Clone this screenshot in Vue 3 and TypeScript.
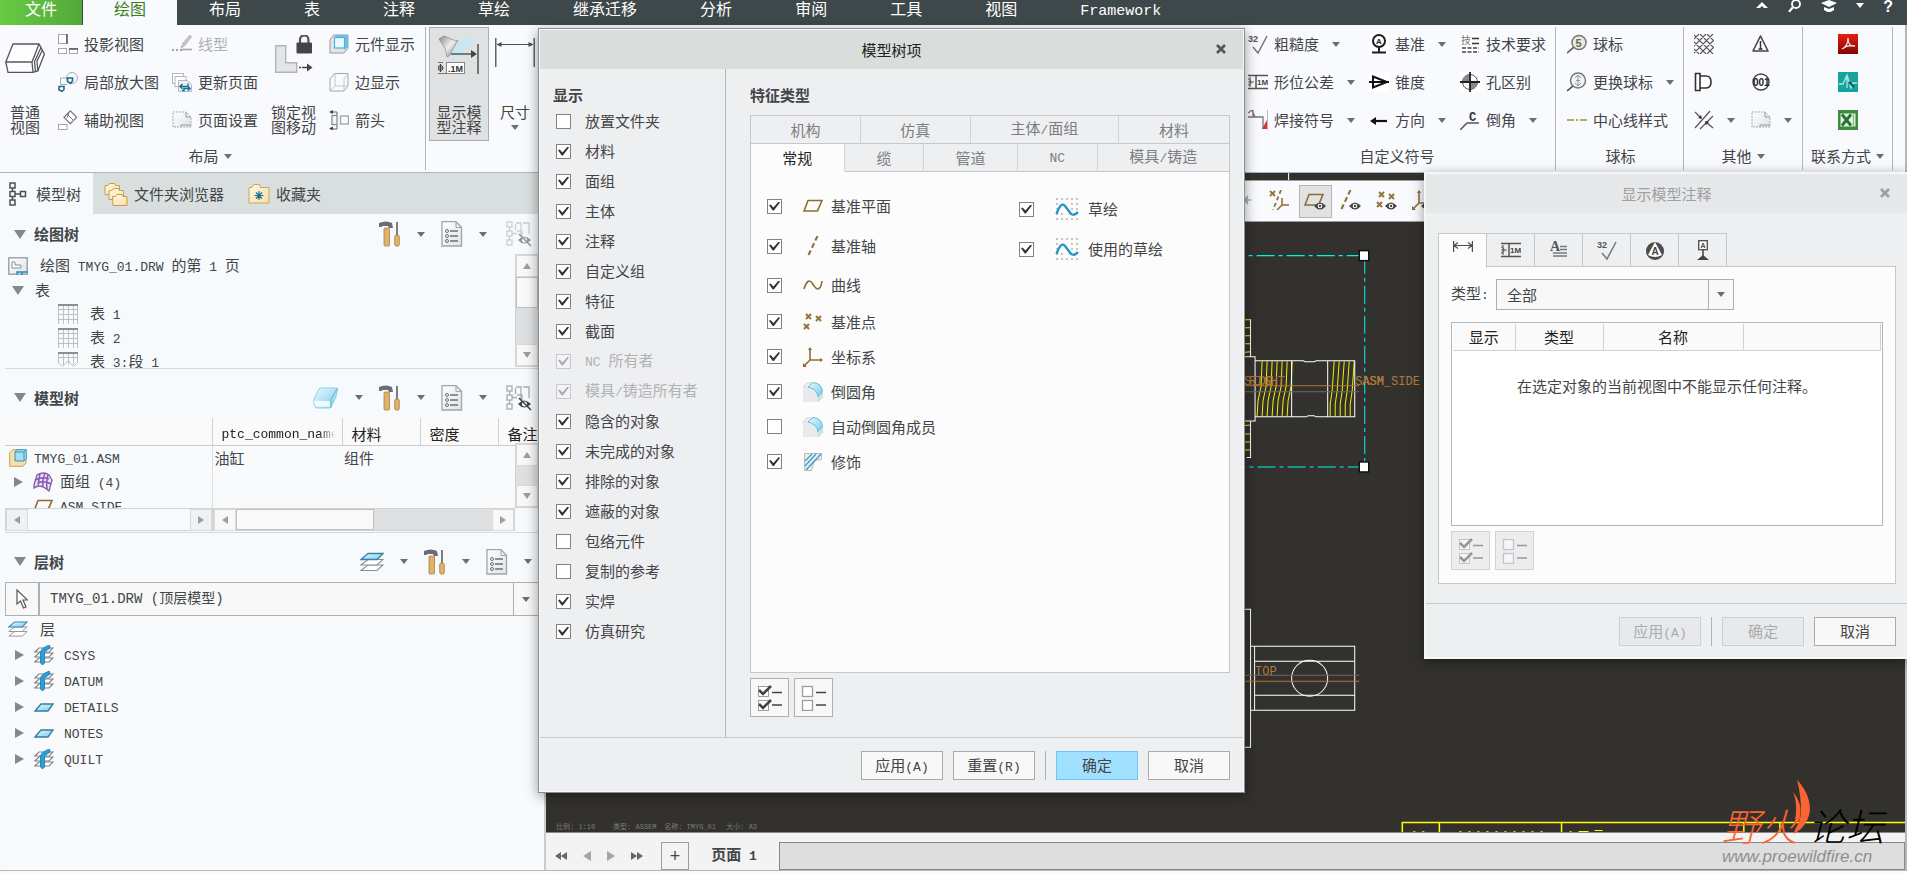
<script setup lang="ts">
import { h, reactive, ref } from 'vue'

interface Item { label: string; icon?: string; arrow?: boolean; off?: boolean }
interface Check { label: string; on: boolean; icon?: string; off?: boolean; tall?: string }

const Txt = (props: { t: string }) =>
  h('span', { class: 'mix' }, props.t.split(/([\x20-\x7e]+)/).filter(Boolean).map(s => h('span', { class: /^[\x20-\x7e]/.test(s) ? 'la' : 'zh' }, s)))
Txt.props = ['t']

const menus = ['布局', '表', '注释', '草绘', '继承迁移', '分析', '审阅', '工具', '视图', 'Framework']

const viewCols: Item[][] = [
  [{ label: '投影视图', icon: 'proj' }, { label: '局部放大图', icon: 'detail' }, { label: '辅助视图', icon: 'aux' }],
  [{ label: '线型', icon: 'pencil', off: true }, { label: '更新页面', icon: 'refresh' }, { label: '页面设置', icon: 'sheet' }],
]
const compCol: Item[] = [{ label: '元件显示', icon: 'cubeblue' }, { label: '边显示', icon: 'cubeline' }, { label: '箭头', icon: 'arrows' }]
const symbolCols: Item[][] = [
  [{ label: '粗糙度', icon: 'rough', arrow: true }, { label: '形位公差', icon: 'gtol', arrow: true }, { label: '焊接符号', icon: 'weld', arrow: true }],
  [{ label: '基准', icon: 'datum', arrow: true }, { label: '锥度', icon: 'taper' }, { label: '方向', icon: 'dir', arrow: true }],
  [{ label: '技术要求', icon: 'tech' }, { label: '孔区别', icon: 'hole' }, { label: '倒角', icon: 'chamfer', arrow: true }],
]
const balloonCol: Item[] = [{ label: '球标', icon: 'balloon' }, { label: '更换球标', icon: 'balloon2', arrow: true }, { label: '中心线样式', icon: 'center' }]
const otherCols: Item[][] = [
  [{ label: '', icon: 'hatch' }, { label: '', icon: 'plug' }, { label: '', icon: 'cross', arrow: true }],
  [{ label: '', icon: 'tri' }, { label: '', icon: 'n001' }, { label: '', icon: 'sheet', arrow: true }],
]
const contactCol: Item[] = [{ label: '', icon: 'pdf' }, { label: '', icon: 'cad' }, { label: '', icon: 'xls' }]

const layers = [
  { n: 'CSYS', icon: 'layerpin' }, { n: 'DATUM', icon: 'layerpin' }, { n: 'DETAILS', icon: 'layer1' },
  { n: 'NOTES', icon: 'layer1' }, { n: 'QUILT', icon: 'layerpin' },
]

const show = reactive<Check[]>([
  { label: '放置文件夹', on: false }, { label: '材料', on: true }, { label: '面组', on: true }, { label: '主体', on: true },
  { label: '注释', on: true }, { label: '自定义组', on: true }, { label: '特征', on: true }, { label: '截面', on: true },
  { label: 'NC 所有者', on: true, off: true }, { label: '模具/铸造所有者', on: true, off: true }, { label: '隐含的对象', on: true },
  { label: '未完成的对象', on: true }, { label: '排除的对象', on: true }, { label: '遮蔽的对象', on: true },
  { label: '包络元件', on: false }, { label: '复制的参考', on: false }, { label: '实焊', on: true }, { label: '仿真研究', on: true },
])
const features = reactive<Check[]>([
  { label: '基准平面', on: true, icon: 'plane', tall: 'r40' }, { label: '基准轴', on: true, icon: 'axis', tall: 'r40' },
  { label: '曲线', on: true, icon: 'curve', tall: 'r38' }, { label: '基准点', on: true, icon: 'points' },
  { label: '坐标系', on: true, icon: 'csys' }, { label: '倒圆角', on: true, icon: 'round' },
  { label: '自动倒圆角成员', on: false, icon: 'round' }, { label: '修饰', on: true, icon: 'cosmetic' },
])
const sketches = reactive<Check[]>([
  { label: '草绘', on: true, icon: 'sketch', tall: 'r40' }, { label: '使用的草绘', on: true, icon: 'sketch', tall: 'r40' },
])
const tabRow1 = [{ t: '机构', w: 'w110' }, { t: '仿真', w: 'w110' }, { t: '主体/面组', w: 'w149' }, { t: '材料', w: 'w110' }]
const tabRow2 = [{ t: '常规', w: 'w94' }, { t: '缆', w: 'w80' }, { t: '管道', w: 'w94' }, { t: 'NC', w: 'w80' }, { t: '模具/铸造', w: 'w132' }]
const activeTab = ref('常规')
const annTabs = ['t-dim', 't-gtol', 't-note', 't-rough', 't-sym', 't-datum']
const activeAnn = ref('t-dim')
const kind = ref('全部')
const layerModel = ref('TMYG_01.DRW (顶层模型)')

const hatchA = Array.from({ length: 7 }, (_, i) => 1256 + i * 5)
const hatchB = Array.from({ length: 5 }, (_, i) => 1329 + i * 5)
</script>

<template>
  <div class="app">
    <svg class="defs" aria-hidden="true">
      <defs>
        <linearGradient id="gb" x1="0" y1="0" x2="1" y2="1"><stop offset="0" stop-color="#e8fbff" /><stop offset="1" stop-color="#7cc9e6" /></linearGradient>
        <linearGradient id="gy" x1="0" y1="0" x2="1" y2="1"><stop offset="0" stop-color="#fff8e4" /><stop offset="1" stop-color="#f6dfa6" /></linearGradient>
        <linearGradient id="gd" x1="0" y1="0" x2="1" y2="1"><stop offset="0" stop-color="#fff" /><stop offset="1" stop-color="#dde3ea" /></linearGradient>
        <linearGradient id="gr" x1="0" y1="0" x2="0" y2="1"><stop offset="0" stop-color="#ee1c12" /><stop offset="1" stop-color="#7d0605" /></linearGradient>
        <linearGradient id="gm" x1="0" y1="0" x2="1" y2="1"><stop offset="0" stop-color="#888" /><stop offset=".5" stop-color="#eee" /><stop offset="1" stop-color="#777" /></linearGradient>
      </defs>
    </svg>
    <svg class="sprite" aria-hidden="true">
      <symbol id="i-box" viewBox="0 0 40 30"><g fill="#fdfdfd" stroke="#55585a" stroke-width="1.300"><path d="M.8 19 8 1h26l5.400 10-6.600 17-5 1.400H3z" /><path d="M.8 19H27l7-18M27 19l1 10M30.500 28.600 29.500 18.500 36 4.500M32.800 28 32 18l5.500-11" fill="none" /></g></symbol>
      <symbol id="i-proj" viewBox="0 0 20 20"><g fill="#fff" stroke="#a4a6a8"><rect x=".5" y=".5" width="8" height="9" /><rect x=".5" y="14.500" width="8" height="5" /><rect x="11.500" y="14.500" width="8" height="5" /></g><path d="M9 0v10M11 15h9" stroke="#555" stroke-width="1.500" /></symbol>
      <symbol id="i-detail" viewBox="0 0 20 20"><g fill="none" stroke="#aaacae"><path d="M12 6H2.500v6.500H9" /><circle cx="14" cy="6" r="5.500" /></g><path d="M9.500 6h5v3l-2 2.500-3-2z M1 14.500h5v3L4 19.300 1 18z" fill="#fff" stroke="#1e6c93" stroke-width="1.600" /></symbol>
      <symbol id="i-aux" viewBox="0 0 20 20"><rect x="7.800" y="2.800" width="9" height="9" transform="rotate(45 12.300 7.300)" fill="#fff" stroke="#77797b" stroke-width="1.200" /><path d="m9 4 6.500 6.500M11 2.500 9 8" stroke="#77797b" /><rect x=".5" y="14.500" width="8.500" height="5" fill="#fff" stroke="#a4a6a8" /></symbol>
      <symbol id="i-pencil" viewBox="0 0 20 20"><path d="m9 14 2-5 7-8 1.500 2-7 9z" fill="#c4c4c4" stroke="#a6a6a6" stroke-width=".6" /><path d="M10 15.500h10" stroke="#a3a3a3" stroke-width="1.600" /><path d="M0 16h10" stroke="#a3a3a3" stroke-width="2" stroke-dasharray="2 2" /></symbol>
      <symbol id="i-refresh" viewBox="0 0 20 20"><g fill="#fff" stroke="#b5b8ba"><rect x=".5" y="1.500" width="11" height="10" /><rect x="3" y="4.500" width="11" height="10" /><path d="M6.500 8.500h9l4 4v7h-13z" fill="#eef1f4" /></g><path d="M16 11.500v3H8m2.500-2.500L8 14.500l2.500 2.200M10 18.500h2v-2h6m-2-2 2 2-2 2" fill="none" stroke="#1c6f98" stroke-width="1.500" /></symbol>
      <symbol id="i-sheet" viewBox="0 0 20 20"><path d="M1 2h13l5 5v10H1z" fill="url(#gd)" stroke="#aaadb0" stroke-dasharray="2 1" /><path d="M14 2v5h5M9 17v-2h10" fill="none" stroke="#989b9e" /></symbol>
      <symbol id="i-lock" viewBox="0 0 38 38"><path d="M.7 10.700h10v17h11v9.600H.7z" fill="#e4e5e6" stroke="#b2b4b6" stroke-width="1.400" /><rect x="21.500" y="7.500" width="15.500" height="11" rx="1" fill="#444" /><path d="M25 8V4.500a4.200 4.200 0 0 1 8.400 0V8" fill="none" stroke="#555" stroke-width="2.200" /><path d="M24 32.500h9" stroke="#444" stroke-width="1.600" stroke-dasharray="2 1 6 0" /><path d="m32 28.500 5.500 4-5.500 4z" fill="#444" /></symbol>
      <symbol id="i-cubeblue" viewBox="0 0 20 20"><path d="M1 6 4.500 1H19v13l-4 5H1z" fill="#e3e5e7" stroke="#97999b" /><path d="M5 3.500 7 1h12v12l-4 3V4z" fill="#6cc0e6" /><rect x="5.500" y="3.500" width="10" height="10.500" fill="#e9faff" stroke="#4cb2dd" stroke-width="1.200" /></symbol>
      <symbol id="i-cubeline" viewBox="0 0 20 20"><g fill="none" stroke="#a2a4a6"><path d="M1 7 5.500 1.500H19V14l-4 5H1z" /><path d="M6 1.500V14L1 19M6 14h13M15 7v12M15 7l4-5.500" stroke="#c4c6c8" /></g></symbol>
      <symbol id="i-arrows" viewBox="0 0 20 20"><g fill="none"><rect x="3" y="5.500" width="5" height="9" stroke="#8b8d8f" stroke-width="1.300" /><rect x="11.500" y="6" width="8" height="8" stroke="#a5a7a9" stroke-width="1.400" /><path d="M8 5V2H2m6 13v4H2" stroke="#666" /></g><path d="M0 2l4-2v4zM0 18.500l4-2v4z" fill="#444" /></symbol>
      <symbol id="i-annot" viewBox="0 0 42 40"><path d="m22 5 18-4-18 20H10z" fill="#c3e8f6" opacity=".8" /><path d="m1 4 5-3 12 5 2-1-9 16-2 1L7 13z" fill="url(#gm)" stroke="#777" stroke-width=".6" /><path d="M13 19h22" stroke="#555" stroke-width="1.500" /><path d="m33 15 6 4-6 4z" fill="#444" /><path d="M40 9v30" stroke="#555" stroke-width="1.500" /><rect x="8.500" y="27.500" width="18" height="11" fill="#fff" stroke="#888" /><path d="M0 38.500h9M0 27.500h5" stroke="#777" /><path d="M0 33h5M2.500 29v8" stroke="#444" stroke-width="1.200" /><circle cx="2.500" cy="33" r="2.500" fill="none" stroke="#444" /><text x="10" y="37" font-family="Liberation Sans" font-weight="700" font-size="9" fill="#333">.1M</text></symbol>
      <symbol id="i-dimbig" viewBox="0 0 40 30"><g stroke="#4a4c4e" fill="#4a4c4e"><path d="M.8 0v29M39.200 0v29" stroke-width="1.300" /><path d="M2 6.500h36" /><path d="m1.500 6.500 5-2.500v5zM38.500 6.500l-5-2.500v5z" stroke="none" /></g></symbol>
      <symbol id="i-rough" viewBox="0 0 20 20"><text x="0" y="8" font-family="Liberation Sans" font-weight="700" font-size="9" fill="#555">32</text><path d="m5 13 5 6L19 2" fill="none" stroke="#777" stroke-width="1.500" /></symbol>
      <symbol id="i-gtol" viewBox="0 0 20 20"><path d="M0 3.500h20M0 16.500h20M8 3v14" stroke="#555" stroke-width="1.500" /><path d="M0 7a3 3 0 0 1 0 6M0 10h6M2 5v10" fill="none" stroke="#666" stroke-width="1.200" /><text x="9" y="13" font-family="Liberation Sans" font-weight="700" font-size="8" fill="#444">1M</text></symbol>
      <symbol id="i-weld" viewBox="0 0 20 20"><path d="M0 7h15v12M5 7V0M0 3l4-3 3 7" fill="none" stroke="#777" stroke-width="1.300" /><path d="m19 10-5 9h5z" fill="#e2302a" /><path d="M19.500 0v20" stroke="#bbb" /></symbol>
      <symbol id="i-datum" viewBox="0 0 20 20"><rect width="20" height="20" fill="#fff" /><circle cx="10" cy="7" r="6" fill="none" stroke="#1e1e1e" stroke-width="2" /><path d="M10 13v5M3 18.500h14" stroke="#1e1e1e" stroke-width="2" /><text x="7" y="10" font-family="Liberation Sans" font-weight="700" font-size="8" fill="#222">A</text></symbol>
      <symbol id="i-taper" viewBox="0 0 20 20"><rect width="20" height="20" fill="#fff" /><path d="M4 4.500 18 10 4 15.500zM0 10h20" fill="none" stroke="#111" stroke-width="2" /></symbol>
      <symbol id="i-dir" viewBox="0 0 20 20"><path d="M4 11h14" stroke="#111" stroke-width="2.200" /><path d="m1 11 6-4v8z" fill="#111" /></symbol>
      <symbol id="i-tech" viewBox="0 0 20 20"><rect width="20" height="20" fill="#fff" /><text x="1" y="10" font-family="Noto Sans CJK SC" font-size="10" fill="#777">技</text><path d="M12 4.500h7M12 9.500h7" stroke="#333" stroke-width="1.600" /><path d="M2 14h17M2 18h17" stroke="#444" stroke-width="1.500" stroke-dasharray="4 1.500" /></symbol>
      <symbol id="i-hole" viewBox="0 0 20 20"><rect width="20" height="20" fill="#fff" /><circle cx="10" cy="10" r="7.500" fill="#fff" stroke="#555" /><path d="M10 2.500a7.500 7.500 0 0 0-7.500 7.500H10zM10 17.500a7.500 7.500 0 0 0 7.500-7.500H10z" fill="#888" /><path d="M10 0v20M0 10h20" stroke="#222" stroke-width="1.800" /></symbol>
      <symbol id="i-chamfer" viewBox="0 0 20 20"><path d="M0 20 7 13h12" fill="none" stroke="#555" stroke-width="1.500" /><text x="9" y="11" font-family="Liberation Mono" font-weight="700" font-size="12" fill="#333">C</text></symbol>
      <symbol id="i-balloon" viewBox="0 0 20 20"><circle cx="12" cy="8.500" r="7" fill="#ecebdc" stroke="#777" stroke-width="1.500" /><path d="m0 19 7-6" stroke="#666" stroke-width="1.700" /><text x="8.500" y="12.500" font-family="Liberation Sans" font-weight="700" font-size="11" fill="#666">5</text></symbol>
      <symbol id="i-balloon2" viewBox="0 0 20 20"><circle cx="11" cy="8.500" r="7.500" fill="#eef4f8" stroke="#777" stroke-width="1.500" /><path d="m0 19 6-5" stroke="#444" stroke-width="1.600" /><path d="M11 3.500v10M8 6l3-3 3 3M8 11l3 3 3-3M9 8.500h4" fill="none" stroke="#889aa8" /></symbol>
      <symbol id="i-center" viewBox="0 0 20 20"><path d="M0 10h20" stroke="#98942c" stroke-width="1.600" stroke-dasharray="7 2 2 2" /></symbol>
      <symbol id="i-hatch" viewBox="0 0 20 20"><path d="M0 5l5-5M0 12 12 0M0 19 19 0M6 20 20 6M13 20l7-7M0 15l5 5M0 8l12 12M0 1l19 19M6 0l14 14M13 0l7 7" stroke="#555" stroke-width="1.100" /></symbol>
      <symbol id="i-plug" viewBox="0 0 20 20"><path d="M1.500 1.500H6v17H1.500zM6 4h6q5 0 5 6t-5 6H6z" fill="#fff" stroke="#333" stroke-width="1.600" /></symbol>
      <symbol id="i-cross" viewBox="0 0 20 20"><path d="M1 18 16 1M6 19 19 6M1 2l6 6M12 12l7 6" stroke="#555" stroke-width="1.200" /><path d="m8 9-4-1 3-3zM11 11l4 1-3 3z" fill="#333" /></symbol>
      <symbol id="i-tri" viewBox="0 0 20 20"><path d="M9.500 2 17 17H2z" fill="#fff" stroke="#444" stroke-width="1.600" stroke-linejoin="round" /><path d="M9.500 7v8M7.500 15h4" stroke="#333" stroke-width="1.500" /></symbol>
      <symbol id="i-n001" viewBox="0 0 20 20"><circle cx="10" cy="10" r="8" fill="#fff" stroke="#444" stroke-width="1.400" /><text x="2" y="13.500" font-family="Liberation Sans" font-weight="700" font-size="10" fill="#222">001</text></symbol>
      <symbol id="i-pdf" viewBox="0 0 20 20"><rect width="20" height="20" fill="url(#gr)" /><path d="M4 15c4-2 6-6 6-11 0 6 3 9 7 8-5-1-9 0-13 3z" fill="none" stroke="#f6dcd8" stroke-width="1.300" /></symbol>
      <symbol id="i-cad" viewBox="0 0 20 20"><rect width="20" height="20" fill="#17a29b" /><path d="M1 12h4l4-9 4 13 2-5h4M9 3v13" fill="none" stroke="#a7e9e2" stroke-width="1.300" /><path d="m11 10 5 5" stroke="#0a5955" stroke-width="2" /></symbol>
      <symbol id="i-xls" viewBox="0 0 20 20"><rect width="20" height="20" fill="#3e8a3e" /><rect x="2.500" y="3.500" width="15" height="13" fill="#e5f2e3" /><path d="m4 4.500 9 11M13 4.500l-9 11" stroke="#22752a" stroke-width="2.800" /><path d="M15.500 4v12" stroke="#8fc38d" stroke-width="1.500" /></symbol>

      <symbol id="i-tree" viewBox="0 0 18 24"><g fill="none" stroke="#4c4f51" stroke-width="1.500"><rect x="1" y="1" width="5" height="5" /><rect x="1" y="9.500" width="5" height="5" /><rect x="1" y="18" width="5" height="5" /><rect x="11.500" y="9.500" width="5" height="5" /><path d="M3.500 6v3.500M3.500 14.500V18M6 12h5.500" /></g></symbol>
      <symbol id="i-folders" viewBox="0 0 24 24"><g fill="url(#gy)" stroke="#c79c53"><path d="M1 3.500h3l1.500-2h5l1 2h4v9H1z" /><path d="M5 8.500h3l1.500-2h5l1 2h4v9H5z" /><path d="M8.500 14.500h3l1.500-2h5l1 2h4v9h-14z" /></g></symbol>
      <symbol id="i-fav" viewBox="0 0 22 22"><path d="M1 4.500h3l1.500-3h6l1 3H21v15.500H1z" fill="url(#gy)" stroke="#c9a567" /><path d="M11 8v9M6.500 12.500h9M8 9.500l6 6M14 9.500l-6 6" stroke="#22708f" stroke-width="1.200" /></symbol>
      <symbol id="i-tools" viewBox="0 0 22 26"><path d="M0 6V2q7-3 13 0l1 5H10L9 5H4L2 6z" fill="#6b6c7a" /><rect x="5" y="7" width="5.500" height="18" rx="1" fill="#dfb368" stroke="#9c7434" stroke-width=".7" /><path d="M18 1v14" stroke="#7a7c88" stroke-width="2" /><rect x="15.700" y="14" width="4.600" height="11" rx="1.500" fill="#dfb368" stroke="#9c7434" stroke-width=".7" /></symbol>
      <symbol id="i-list" viewBox="0 0 22 26"><path d="M1 .7h14l5.500 5.500V25H1z" fill="url(#gd)" stroke="#a2a5a8" stroke-width="1.300" /><path d="M15 1v5.500h5.500" fill="none" stroke="#a2a5a8" /><g stroke="#6d7072" fill="none"><circle cx="6" cy="10" r="1.500" /><circle cx="6" cy="15" r="1.500" /><circle cx="6" cy="20" r="1.500" /><path d="M9 10h8M9 15h8M9 20h8" stroke-width="1.300" /></g></symbol>
      <symbol id="i-treeeye" viewBox="0 0 26 26"><g fill="none" stroke="#a9abad" stroke-width="1.300"><rect x="1" y="1" width="5" height="5" /><rect x="1" y="10" width="5" height="5" /><rect x="1" y="19" width="5" height="5" /><path d="M3.500 6v4M3.500 15v4M6 12.500h5M9.500 3v6M10 2h5v12M17 2h6v11" /><path d="M11 10h5v5" /></g><path d="M12 19q6-7 13 0-7 7-13 0z" fill="currentColor" /><circle cx="18.500" cy="19" r="2.500" fill="#fff" /><path d="m13 13 12 12" stroke="currentColor" stroke-width="1.500" /></symbol>
      <symbol id="i-cube" viewBox="0 0 26 22"><path d="M1 12 6 2q1-1 2-1h16q1 1 .5 2L23 10l-5 10-1 1H3l-2-3z" fill="url(#gb)" stroke="#8fcfe4" /><path d="m17 14 7-12M18 14v7" fill="none" stroke="#5fb4d2" /><path d="m1 13 16 1v6H3l-2-3z" fill="#effcff" stroke="#a6dcec" stroke-width=".6" /></symbol>
      <symbol id="i-drw" viewBox="0 0 20 18"><rect x=".8" y=".8" width="18.400" height="16.400" fill="url(#gd)" stroke="#96999c" stroke-width="1.300" /><path d="M4 5h3v3h6v3H4z" fill="#fff" stroke="#8b8e91" /><path d="M9 17.500V15h11M14 15v3" fill="none" stroke="#1c8fc6" stroke-width="1.500" /></symbol>
      <symbol id="i-grid" viewBox="0 0 20 20"><path d="M.5 5.500h19M.5 10.500h19M.5 15.500h19M5.500 1v19M10.500 1v19M15.500 1v19M.5 1v19M19.500 1v19" stroke="#bfc1c3" /><path d="M0 1h20" stroke="#8c8e90" stroke-width="2" /></symbol>
      <symbol id="i-gridcut" viewBox="0 0 20 20"><path d="M.5 5.500h19M5.500 1v12M10.500 1v12M15.500 1v12M.5 1v10l4 3.500 6-6 5 6 4-4V1" stroke="#bfc1c3" fill="none" /><path d="M0 1h20" stroke="#8c8e90" stroke-width="2" /></symbol>
      <symbol id="i-asm" viewBox="0 0 18 18"><path d="M.7 4 4 .7h5V10h8v4l-3 3.300H.7z" fill="#f8dfae" stroke="#c99e55" /><path d="M6 3 8 .7h9.300v9L15 12H6z" fill="#9fe0f6" stroke="#3c91b5" /><path d="M6 3h9v9M15 3l2-2" fill="none" stroke="#3c91b5" /></symbol>
      <symbol id="i-quilt" viewBox="0 0 20 20"><path d="M1 13 4 3q7-4 12 0l3 5-3 11-4-3q-6-4-11 0z" fill="#ede3f6" stroke="#8556b4" stroke-width="1.300" /><path d="M2 8q8-4 14-1M7 1.500 5 13M12 1.500Q9 8 10 14M5 11q6-3 13 1M15 3q-2 6-1 14" fill="none" stroke="#8556b4" stroke-width="1.500" /></symbol>
      <symbol id="i-layers" viewBox="0 0 24 20"><g stroke="#8c8f92" stroke-width="1.100" fill="#fff"><path d="M1 18.500 8 13h15l-6 5.500z" /><path d="M1 13 8 7.500h15L17 13z" /></g><path d="m1 7.500 7-6h15l-6 6z" fill="url(#gb)" stroke="#2f86aa" stroke-width="1.300" /></symbol>
      <symbol id="i-layerpin" viewBox="0 0 20 20"><g stroke="#7d8083" stroke-width="1.100" fill="#fff"><path d="M.8 17 5 13h14l-4 4z" /><path d="M.8 12 5 8h14l-4 4z" /><path d="M.8 7 5 3h14l-4 4z" /></g><path d="M6.500 8q0-5 9-8l.5 3-5.500 4v11l-2 2-2-2z" fill="#28a0dc" stroke="#1b79b0" stroke-width=".8" /></symbol>
      <symbol id="i-layer1" viewBox="0 0 20 20"><path d="m1 14 6-7h12l-5 7z" fill="url(#gb)" stroke="#2f7fa3" stroke-width="1.300" /></symbol>
      <symbol id="i-cursor" viewBox="0 0 12 20"><path d="M1 1v14l3.500-3 3 7 2.500-1-3-7h4.500z" fill="#fff" stroke="#55585a" stroke-width="1.200" /></symbol>

      <symbol id="i-plane" viewBox="0 0 20 20"><path d="M5 4.500h14L14.500 15H1z" fill="none" stroke="#8d6d35" stroke-width="1.600" /></symbol>
      <symbol id="i-axis" viewBox="0 0 20 20"><path d="M14.500 0 5 20" stroke="#8d6d35" stroke-width="2" stroke-dasharray="5 3" /></symbol>
      <symbol id="i-curve" viewBox="0 0 20 20"><path d="M1 14Q5 2 9 8t5.500 6Q18 14 19 6" fill="none" stroke="#8d6d35" stroke-width="1.600" /></symbol>
      <symbol id="i-points" viewBox="0 0 20 20"><path d="m3 2 5 5M8 2 3 7M13 4l5 5M18 4l-5 5M1 12l5 5M6 12l-5 5" stroke="#93743b" stroke-width="2" /></symbol>
      <symbol id="i-csys" viewBox="0 0 20 20"><path d="M7 1v12h12M7 13l-6 6" fill="none" stroke="#8d6d35" stroke-width="1.600" /><path d="m7 0-2 3h4zM20 13l-3-2v4zM0 20v-4l4 4z" fill="#8d6d35" /></symbol>
      <symbol id="i-round" viewBox="0 0 20 20"><path d="M0 6h5q9 1 9 9v5H0z" fill="#e9eaeb" /><path d="m0 5 4-4h7L6 5z" fill="#f2f3f4" stroke="#bbb" stroke-width=".6" /><path d="m5 5 5-4.500q9 1 9.500 9L15 15Q14 7 5 5z" fill="url(#gb)" stroke="#49acd3" stroke-width=".8" /><path d="m15 15 5-5v5l-5 5z" fill="#cfe5ee" stroke="#9cc" stroke-width=".5" /></symbol>
      <symbol id="i-cosmetic" viewBox="0 0 20 20"><path d="M1.500 1.500h17v6l-7 1-3 10h-7z" fill="#eceded" stroke="#b9bbbd" /><path d="m2 9 7-7M2 14 13 2M3 18 18 2" stroke="#3c9ec9" stroke-width="1.300" /></symbol>
      <symbol id="i-sketch" viewBox="0 0 24 24"><g stroke="#b3b3b3" stroke-width="1.600" stroke-dasharray="2 3"><path d="M1 2h22M1 7h5M16 7h7M1 12h5M16 12h7M1 17h10M1 22h22" /></g><path d="M1.500 17Q6 4 10 9t6 8q4 2 7-2" fill="none" stroke="#2497c8" stroke-width="2.400" /></symbol>
      <symbol id="i-checks" viewBox="0 0 26 26"><g fill="#fff" stroke="#9b9d9f"><rect x="1.500" y="1.500" width="10" height="10" /><rect x="1.500" y="15.500" width="10" height="10" /></g><path d="m2 5 4 4 8-8M2 19l4 4 8-8" fill="none" stroke="currentColor" stroke-width="2.600" /><path d="M15 7.500h10M15 20h10" stroke="currentColor" stroke-width="1.400" /></symbol>
      <symbol id="i-unchecks" viewBox="0 0 26 26"><g fill="#fff" stroke="#9b9d9f" stroke-width="1.300"><rect x="1.500" y="1.500" width="10" height="10" /><rect x="1.500" y="15.500" width="10" height="10" /></g><path d="M15 7.500h10M15 20h10" stroke="currentColor" stroke-width="1.400" /></symbol>

      <symbol id="i-t-dim" viewBox="0 0 20 20"><path d="M.6 0v11M19.400 0v11M1 4.500h18M5 1.500l-4 3 4 3M15 1.500l4 3-4 3" fill="none" stroke="#4a4c4e" stroke-width="1.200" /></symbol>
      <symbol id="i-t-gtol" viewBox="0 0 20 20"><use href="#i-gtol" /></symbol>
      <symbol id="i-t-note" viewBox="0 0 20 20"><text x="1" y="11" font-family="Liberation Serif" font-weight="700" font-size="14" fill="#555">A</text><path d="M11 6.500h7M11 9.500h7M4 13h14M4 16h14" stroke="#777" stroke-width="1.300" /></symbol>
      <symbol id="i-t-rough" viewBox="0 0 20 20"><use href="#i-rough" /></symbol>
      <symbol id="i-t-sym" viewBox="0 0 20 20"><circle cx="10" cy="11" r="9" fill="#4a4c4e" /><path d="M10 2 3 15q7 4 14 0z" fill="#fff" /><text x="6.500" y="15" font-family="Liberation Sans" font-weight="700" font-size="10" fill="#444">A</text></symbol>
      <symbol id="i-t-datum" viewBox="0 0 20 20"><rect x="5.700" y=".7" width="8.600" height="9" fill="#fff" stroke="#555" stroke-width="1.400" /><text x="7.500" y="8" font-family="Liberation Sans" font-weight="700" font-size="7" fill="#444">A</text><path d="M10 10v6" stroke="#444" stroke-width="1.500" /><path d="m4 20 6-5 6 5z" fill="#444" /></symbol>
      <symbol id="i-dtm" viewBox="0 0 22 22"><path d="m2 1 5 5M7 1 2 6" stroke="#93743b" stroke-width="1.800" /><path d="M13 0 5 20" stroke="#8d6d35" stroke-width="1.800" stroke-dasharray="4 3" /><path d="M14 8v7h7M14 15l-5 5" fill="none" stroke="#8d6d35" stroke-width="1.500" /></symbol>
      <symbol id="i-eye" viewBox="0 0 12 8"><path d="M0 4q6-7 12 0-6 7-12 0z" fill="#444" /><circle cx="6" cy="4" r="2.300" fill="#fff" /><circle cx="6" cy="4" r="1.200" fill="#444" /></symbol>
    </svg>

    <header class="menubar">
      <nav class="menus">
        <button class="menu file">文件</button>
        <button class="menu current">绘图</button>
        <button v-for="m in menus" :key="m" class="menu"><Txt :t="m" /></button>
      </nav>
      <div class="quick">
        <button aria-label="收起"><svg width="14" height="12"><path d="m1 8 6-6 6 6H9L7 6 5 8z" fill="#fff" /></svg></button>
        <button aria-label="搜索"><svg width="14" height="12"><circle cx="8" cy="4" r="4" fill="none" stroke="#fff" stroke-width="1.800" /><path d="m5 7-4 5" stroke="#fff" stroke-width="2.200" /></svg></button>
        <button aria-label="学习"><svg width="16" height="12"><path d="m0 3 8-3 8 3-8 4zM3 7l5 2 5-2v3l-5 3-5-3z" fill="#fff" /></svg></button>
        <button aria-label="更多"><svg width="8" height="12"><path d="M0 3h8L4 8z" fill="#fff" /></svg></button>
        <button class="help" aria-label="帮助">?</button>
      </div>
    </header>

    <section class="ribbon">
      <div class="group views">
        <div class="cols">
          <button class="big b40"><svg class="s40"><use href="#i-box" /></svg><span>普通<br />视图</span></button>
          <div v-for="(c, i) in viewCols" :key="i" class="col">
            <button v-for="b in c" :key="b.label" class="tool" :disabled="b.off"><svg class="s20"><use :href="'#i-' + b.icon" /></svg>{{ b.label }}</button>
          </div>
          <button class="big b45"><svg class="s38"><use href="#i-lock" /></svg><span>锁定视<br />图移动</span></button>
          <div class="col">
            <button v-for="b in compCol" :key="b.label" class="tool"><svg class="s20"><use :href="'#i-' + b.icon" /></svg>{{ b.label }}</button>
          </div>
        </div>
        <div class="glabel">布局<i class="dn" /></div>
      </div>
      <div class="group annotate">
        <div class="cols tight">
          <button class="big pressed"><svg class="s42"><use href="#i-annot" /></svg><span>显示模<br />型注释</span></button>
          <button class="big b40"><svg class="s40"><use href="#i-dimbig" /></svg><span>尺寸<br /><i class="dn" /></span></button>
        </div>
      </div>
      <div class="group symbols">
        <div class="cols wide">
          <div v-for="(c, i) in symbolCols" :key="i" class="col">
            <button v-for="b in c" :key="b.label" class="tool"><svg class="s20"><use :href="'#i-' + b.icon" /></svg>{{ b.label }}<i v-if="b.arrow" class="dn" /></button>
          </div>
        </div>
        <div class="glabel">自定义符号</div>
      </div>
      <div class="group balloons">
        <div class="cols"><div class="col">
          <button v-for="b in balloonCol" :key="b.label" class="tool"><svg class="s20"><use :href="'#i-' + b.icon" /></svg>{{ b.label }}<i v-if="b.arrow" class="dn" /></button>
        </div></div>
        <div class="glabel">球标</div>
      </div>
      <div class="group others">
        <div class="cols wide">
          <div v-for="(c, i) in otherCols" :key="i" class="col">
            <button v-for="b in c" :key="b.icon" class="tool" :aria-label="b.icon"><svg class="s20"><use :href="'#i-' + b.icon" /></svg><i v-if="b.arrow" class="dn" /></button>
          </div>
        </div>
        <div class="glabel">其他<i class="dn" /></div>
      </div>
      <div class="group contact">
        <div class="cols"><div class="col">
          <button v-for="b in contactCol" :key="b.icon" class="tool" :aria-label="b.icon"><svg class="s20"><use :href="'#i-' + b.icon" /></svg></button>
        </div></div>
        <div class="glabel">联系方式<i class="dn" /></div>
      </div>
    </section>

    <main class="work">
      <aside class="side">
        <nav class="sidetabs">
          <button class="stab on"><svg class="tree"><use href="#i-tree" /></svg>模型树</button>
          <button class="stab"><svg class="s24"><use href="#i-folders" /></svg>文件夹浏览器</button>
          <button class="stab"><svg class="s22"><use href="#i-fav" /></svg>收藏夹</button>
        </nav>

        <header class="sh first"><i class="tri" /><h2>绘图树</h2><span class="grow" />
          <svg class="tl"><use href="#i-tools" /></svg><i class="dn" /><svg class="tl"><use href="#i-list" /></svg><i class="dn" /><svg class="te dim"><use href="#i-treeeye" /></svg></header>
        <div class="pane drawtree">
          <ul>
            <li class="d0"><svg class="drw"><use href="#i-drw" /></svg><Txt t="绘图 TMYG_01.DRW 的第 1 页" /></li>
            <li class="d1"><i class="tri" />表</li>
            <li class="d2"><svg class="s20"><use href="#i-grid" /></svg><Txt t="表 1" /></li>
            <li class="d2"><svg class="s20"><use href="#i-grid" /></svg><Txt t="表 2" /></li>
            <li class="d2"><svg class="s20"><use href="#i-gridcut" /></svg><Txt t="表 3:段 1" /></li>
          </ul>
          <div class="vbar"><i class="sb up" /><i class="thumb" /><span class="grow" /><i class="sb down" /></div>
        </div>

        <header class="sh"><i class="tri" /><h2>模型树</h2><span class="grow" />
          <svg class="cb"><use href="#i-cube" /></svg><i class="dn" /><svg class="tl"><use href="#i-tools" /></svg><i class="dn" /><svg class="tl"><use href="#i-list" /></svg><i class="dn" /><svg class="te"><use href="#i-treeeye" /></svg></header>
        <div class="modeltree">
          <table class="mt">
            <colgroup><col class="c1" /><col class="c2" /><col class="c3" /><col class="c3" /><col /></colgroup>
            <thead><tr><th></th><th><div class="fade"><Txt t="ptc_common_name" /></div></th><th>材料</th><th>密度</th><th>备注</th></tr></thead>
            <tbody>
              <tr><td><div class="cell"><svg class="s18"><use href="#i-asm" /></svg><Txt t="TMYG_01.ASM" /></div></td><td>油缸</td><td>组件</td><td></td><td></td></tr>
              <tr><td><div class="cell n1"><i class="rt" /><svg class="s20"><use href="#i-quilt" /></svg><Txt t="面组 (4)" /></div></td><td></td><td></td><td></td><td></td></tr>
              <tr><td><div class="cell n2"><svg class="s20"><use href="#i-plane" /></svg><Txt t="ASM_SIDE" /></div></td><td></td><td></td><td></td><td></td></tr>
            </tbody>
          </table>
          <div class="vbar low"><i class="sb up" /><span class="grow" /><i class="sb down" /></div>
        </div>
        <div class="hbars">
          <div class="hbar pale"><i class="sb left" /><span class="grow" /><i class="sb right" /></div>
          <div class="hbar"><i class="sb left" /><i class="hthumb" /><span class="grow" /><i class="sb right" /></div>
        </div>

        <header class="sh"><i class="tri" /><h2>层树</h2><span class="grow" />
          <svg class="ly"><use href="#i-layers" /></svg><i class="dn" /><svg class="tl"><use href="#i-tools" /></svg><i class="dn" /><svg class="tl"><use href="#i-list" /></svg><i class="dn" /></header>
        <div class="layerpick">
          <button class="pick" aria-label="选择"><svg class="cur"><use href="#i-cursor" /></svg></button>
          <div class="combo"><select v-model="layerModel" aria-label="层模型"><option>TMYG_01.DRW (顶层模型)</option></select><span class="cbtn"><i class="dn" /></span></div>
        </div>
        <ul class="layers">
          <li class="d0"><svg class="s20"><use href="#i-layers" /></svg>层</li>
          <li v-for="l in layers" :key="l.n" class="d1"><i class="rt" /><svg class="s20"><use :href="'#i-' + l.icon" /></svg><Txt :t="l.n" /></li>
        </ul>
      </aside>

      <section class="stage">
        <div class="canvas">
          <svg class="drawing" viewBox="546 173 1359 658" preserveAspectRatio="xMinYMin slice">
            <g fill="none" stroke="#00f2f2"><path d="M1363.500 255.500H1000M1363.500 255.500v211H1000" stroke-dasharray="18 4 4 4" /></g>
            <g stroke="#f0f000" fill="none">
              <path d="M1240 319.500h9M1240 327.500h9M1240 335.500h9M1240 343.500h9M1240 352.500l9-1M1240 425.500l9-1M1240 433.500h9M1240 441.500h9M1240 449.500h9" />
              <path v-for="x in hatchA" :key="x" :d="`M${x} 416l1-16 3-14 1-25`" />
              <path v-for="x in hatchB" :key="x" :d="`M${x} 416l0-12 2-14 2-29`" />
            </g>
            <g stroke="#fff" fill="none">
              <path d="M1287.500 173v8M1249.500 319v37M1240 356.500h14v64h-14M1249.500 420v37h-4" />
              <path d="M1254 360.500h48l2 1h9l2-1h38.500v56H1315l-2-1h-6l-2 1h-51M1290.500 361v55M1326.500 361v55" />
              <path d="M1240 608.500h9.500v138H1240M1250 645.500h103.500v64H1250M1253.500 646v63M1253 660.500h100M1253 694.500h100" />
              <circle cx="1308.500" cy="677.500" r="18" />
            </g>
            <path d="M1240 391.500h118M1240 674.500h118" stroke="#6b6a68" />
            <path d="M1240 385.500h118M1240 680.500h118" stroke="#b4772f" />
            <g class="cad"><text x="1243" y="385">SIDE</text><text x="1248" y="385">RIGHT</text><text x="1354" y="385">SASM</text><text x="1361" y="385">ASM_SIDE</text><text x="1254" y="674">TOP</text></g>
            <g fill="#fff" stroke="#111" stroke-width="1.500"><rect x="1358" y="250.500" width="9.500" height="10" /><rect x="1358" y="461.500" width="9.500" height="10" /></g>
            <path d="M1401 831v-9.500h504M1438 821v10M1560 821v10M1742 821v10M1778 821v10" stroke="#ff0" fill="none" stroke-width="1.500" />
            <path d="M1412 830.500h14M1458 830.500h84M1568 830.500h8" stroke="#dede00" stroke-dasharray="2 7" /><path d="M1577 830.500h10M1593 829.500h8" stroke="#ff0" />
            <g class="tiny"><text x="556" y="828">比例: 1:10</text><text x="613" y="828">类型: ASSEM</text><text x="664" y="828">名称: TMYG_01</text><text x="726" y="828">大小: A3</text></g>
          </svg>
          <div class="gtools">
            <button class="gt" aria-label="上一个"><svg width="20" height="22"><path d="M1 2h8v18H1zM18 10h-6m3-4-4 4 4 4" fill="#bbb" stroke="#aaa" stroke-width="1.500" /></svg></button>
            <button class="gt" aria-label="基准显示"><svg width="22" height="22"><use href="#i-dtm" /></svg></button>
            <button class="gt on" aria-label="平面显示"><svg width="22" height="22"><use href="#i-plane" width="20" height="20" /><use href="#i-eye" x="10" y="12" width="12" height="8" /></svg></button>
            <button class="gt" aria-label="轴显示"><svg width="22" height="22"><use href="#i-axis" x="-4" width="20" height="20" /><use href="#i-eye" x="9" y="12" width="12" height="8" /></svg></button>
            <button class="gt" aria-label="点显示"><svg width="22" height="22"><use href="#i-points" width="20" height="20" /><use href="#i-eye" x="9" y="12" width="12" height="8" /></svg></button>
            <button class="gt" aria-label="坐标系显示"><svg width="22" height="22"><use href="#i-csys" width="20" height="20" /><use href="#i-eye" x="9" y="12" width="12" height="8" /></svg></button>
          </div>
        </div>
        <footer class="sheets">
          <div class="nav">
            <button aria-label="首页"><svg width="14" height="8"><path d="M7 0v8L1 4zM13 0v8L7 4z" fill="#666" /></svg></button>
            <button aria-label="上一页"><svg width="10" height="10"><path d="M9 0v10L1 5z" fill="#a5a5a5" /></svg></button>
            <button aria-label="下一页"><svg width="10" height="10"><path d="M1 0v10l8-5z" fill="#a5a5a5" /></svg></button>
            <button aria-label="末页"><svg width="14" height="8"><path d="M1 0v8l6-4zM7 0v8l6-4z" fill="#666" /></svg></button>
          </div>
          <button class="add" aria-label="新建页面">+</button>
          <button class="page"><Txt t="页面 1" /></button>
          <div class="rest" />
        </footer>
      </section>
    </main>

    <div class="mark">
      <svg class="flame" viewBox="0 0 20 54"><path d="M7 0c12 12 17 30 9 42-3 6-8 9-12 12 0-5 7-12 7-22S10 10 7 0z" /><path d="M3 12c6 8 10 16 6 28l-5 6c2-10 4-22-1-34z" /></svg>
      <div class="big-mark"><span class="fire">野火</span><span>论坛</span></div>
      <div class="url">www.proewildfire.cn</div>
    </div>

    <section class="dialog ann" role="dialog" aria-labelledby="ann-title">
      <header class="dtitle"><h1 id="ann-title">显示模型注释</h1><button class="x" aria-label="关闭"><svg width="10" height="10"><path d="m1 1 8 8M9 1 1 9" stroke="currentColor" stroke-width="2.600" /></svg></button></header>
      <div class="abody">
        <div class="atabs"><button v-for="t in annTabs" :key="t" :class="['atab', { on: activeAnn === t }]" :aria-label="t" @click="activeAnn = t"><svg class="s20"><use :href="'#i-' + t" /></svg></button></div>
        <div class="apanel">
          <div class="kind"><label for="kind">类型<span class="la">:</span></label><div class="combo"><select id="kind" v-model="kind"><option>全部</option></select><span class="cbtn"><i class="dn" /></span></div></div>
          <div class="atable">
            <table><colgroup><col class="k1" /><col class="k2" /><col class="k3" /><col /></colgroup><thead><tr><th>显示</th><th>类型</th><th>名称</th><th></th></tr></thead></table>
            <p>在选定对象的当前视图中不能显示任何注释。</p>
          </div>
          <div class="pair"><button disabled aria-label="全选"><svg class="s26"><use href="#i-checks" /></svg></button><button disabled aria-label="全部取消"><svg class="s26"><use href="#i-unchecks" /></svg></button></div>
        </div>
      </div>
      <footer class="dfoot"><button class="btn" disabled><Txt t="应用(A)" /></button><i class="vs" /><button class="btn" disabled>确定</button><button class="btn">取消</button></footer>
    </section>

    <section class="dialog items" role="dialog" aria-labelledby="items-title">
      <header class="dtitle"><h1 id="items-title">模型树项</h1><button class="x" aria-label="关闭"><svg width="10" height="10"><path d="m1 1 8 8M9 1 1 9" stroke="currentColor" stroke-width="2.600" /></svg></button></header>
      <div class="ibody">
        <div class="showcol">
          <h2>显示</h2>
          <label v-for="c in show" :key="c.label" :class="['chk', { off: c.off }]"><input v-model="c.on" type="checkbox" :disabled="c.off" /><Txt :t="c.label" /></label>
        </div>
        <div class="featcol">
          <h2>特征类型</h2>
          <div class="trow top"><button v-for="t in tabRow1" :key="t.t" :class="['ftab', t.w]" @click="activeTab = t.t"><Txt :t="t.t" /></button></div>
          <div class="trow"><button v-for="t in tabRow2" :key="t.t" :class="['ftab', t.w, { on: activeTab === t.t }]" @click="activeTab = t.t"><Txt :t="t.t" /></button></div>
          <div class="fpanel">
            <div class="fcol"><label v-for="c in features" :key="c.label" :class="['chk feat', c.tall]"><input v-model="c.on" type="checkbox" /><svg class="s20"><use :href="'#i-' + c.icon" /></svg><span>{{ c.label }}</span></label></div>
            <div class="fcol second"><label v-for="c in sketches" :key="c.label" :class="['chk feat sk', c.tall]"><input v-model="c.on" type="checkbox" /><svg class="s24"><use :href="'#i-' + c.icon" /></svg><span>{{ c.label }}</span></label></div>
          </div>
          <div class="pair"><button aria-label="全选"><svg class="s26"><use href="#i-checks" /></svg></button><button aria-label="全部取消"><svg class="s26"><use href="#i-unchecks" /></svg></button></div>
        </div>
      </div>
      <footer class="dfoot"><button class="btn"><Txt t="应用(A)" /></button><button class="btn"><Txt t="重置(R)" /></button><i class="vs" /><button class="btn ok">确定</button><button class="btn">取消</button></footer>
    </section>
  </div>
</template>

<style>
body { margin: 0; overflow: hidden; }
.la { font-family: "Liberation Mono", monospace; font-size: 13px; white-space: pre; }
.menu .la { font-size: 15px; }
</style>

<style scoped>
.app { position: relative; display: flex; flex-direction: column; height: 100vh; overflow: hidden; background: #f8fafd; color: #434547; font: 400 15px/20px "Noto Sans CJK SC", "Liberation Sans", sans-serif; }
.app *, .app *::after { box-sizing: border-box; }
.defs { position: absolute; width: 0; height: 0; }
.app .sprite { display: none; }
button { font: inherit; color: inherit; background: none; border: 0; padding: 0; margin: 0; white-space: nowrap; }
h1, h2, p, ul { margin: 0; padding: 0; font-size: 15px; }
ul { list-style: none; }
svg { flex: none; display: block; }
.s18 { width: 18px; height: 18px; } .s20 { width: 20px; height: 20px; } .s22 { width: 22px; height: 22px; }
.s24 { width: 24px; height: 24px; } .s26 { width: 26px; height: 26px; }
.s38 { width: 38px; height: 38px; } .s40 { width: 40px; height: 30px; } .s42 { width: 42px; height: 40px; }
.grow { flex: 1; }
.dn { flex: none; display: inline-block; border: 4px solid transparent; border-top: 5px solid #6c6e70; border-bottom: 0; }
.tri { flex: none; border: 6px solid transparent; border-top: 9px solid #85888a; border-bottom: 0; }
.rt { flex: none; border: 5px solid transparent; border-left: 9px solid #85888a; border-right: 0; }

.menubar { display: flex; justify-content: space-between; height: 25px; background: #3e484a; color: #fff; font-size: 16px; overflow: hidden; }
.menus { display: flex; gap: 1px; }
.menu { height: 25px; padding: 0 31px 10px; line-height: 16px; }
.menu.file { padding: 0 25px 10px; background: linear-gradient(90deg, #66cb44, #55a839); }
.menu.current { background: #f8fafd; color: #3b7d1d; }
.quick { display: flex; align-items: flex-start; gap: 19px; padding-right: 14px; }
.help { font: 700 16px/14px "Liberation Sans", sans-serif; }

.ribbon { display: flex; height: 148px; padding-right: 12px; border-bottom: 1px solid #a9b8b8; border-right: 2px solid #b3b9bb; background: #f8fafd; }
.group { display: flex; flex-direction: column; border-right: 1px solid #b4b7ba; margin: 2px 0; }
.cols { display: flex; gap: 13px; height: 112px; flex: none; }
.cols.wide { gap: 14px; }
.col { display: flex; flex-direction: column; margin-top: -2px; }
.tool { display: flex; align-items: center; gap: 6px; height: 38px; flex: none; }
.tool .dn { margin-left: 7px; }
.tool:disabled { color: #aeb0b2; }
.glabel { display: flex; align-items: center; justify-content: center; gap: 5px; height: 34px; flex: none; }
.views { padding: 0 10px 0 5px; }
.big { display: flex; flex-direction: column; align-items: center; justify-content: space-between; padding: 16px 0 5px; line-height: 15px; }
.big span { display: block; height: 30px; white-space: nowrap; }
.big .dn { vertical-align: 3px; }
.b40 { width: 40px; } .b45 { width: 45px; padding-top: 8px; }
.annotate { flex: 1; border: 0; padding-left: 3px; }
.cols.tight { gap: 6px; height: 114px; }
.pressed { width: 60px; padding: 7px 0 6px; background: #e0e1e3; border: 1px solid #abadaf; }
.tight .b40 { padding-top: 11px; padding-bottom: 7px; }
.symbols { padding: 0 9px 0 9px; }
.balloons { padding: 0 9px 0 11px; }
.others { padding: 0 10px; }
.others .wide { gap: 16px; }
.others .col:last-child { width: 41px; }
.contact { width: 90px; align-items: center; }

.work { display: flex; flex: 1; min-height: 0; margin-bottom: 2px; border-bottom: 1px solid #b1b7bd; }
.side { display: flex; flex-direction: column; width: 546px; flex: none; background: #f7fafc; border-right: 2px solid #c9ccce; }
.sidetabs { display: flex; height: 41px; background: #d9dfde; }
.stab { display: flex; align-items: center; gap: 6px; padding: 0 13px 0 11px; }
.stab.on { width: 93px; padding: 0 0 0 9px; gap: 9px; background: #f7fafc; }
.tree { width: 18px; height: 24px; }
.sh { display: flex; align-items: center; gap: 16px; height: 49px; padding: 8px 12px 0 14px; }
.sh.first { height: 40px; padding-top: 0; }
.sh h2 { margin-left: -8px; font-weight: 700; }
.tl { width: 22px; height: 26px; } .te { width: 26px; height: 26px; margin-left: 3px; color: #3f4142; }
.te.dim { opacity: .55; } .cb { width: 26px; height: 22px; } .ly { width: 24px; height: 20px; }
.pane { display: flex; height: 115px; margin-left: 5px; border-bottom: 1px solid #d5dbdb; overflow: hidden; }
.pane ul { flex: 1; overflow: hidden; }
li { display: flex; align-items: center; height: 24px; white-space: pre; }
.drw { width: 20px; height: 18px; }
.drawtree .d0 { padding-left: 3px; gap: 12px; } .drawtree .d1 { padding-left: 7px; gap: 11px; } .drawtree .d2 { padding-left: 53px; gap: 12px; }
.vbar { display: flex; flex-direction: column; width: 24px; height: 113px; margin-right: 5px; border: 1px solid #d0d2d4; background: #dfe0e2; flex: none; }
.vbar.low { height: 65px; margin-top: 25px; }
.sb { flex: none; display: flex; align-items: center; justify-content: center; width: 22px; height: 22px; background: #f8f8f9; border: 1px solid #d8dadc; }
.sb::after { content: ""; border: 4px solid transparent; }
.up::after { border-bottom: 6px solid #9a9c9e; border-top: 0; } .down::after { border-top: 6px solid #9a9c9e; border-bottom: 0; }
.left::after { border-right: 6px solid #9a9c9e; border-left: 0; } .right::after { border-left: 6px solid #9a9c9e; border-right: 0; }
.thumb { height: 31px; background: #f9f9f9; border: 1px solid #bfc1c3; }
.modeltree { display: flex; height: 90px; margin-left: 5px; overflow: hidden; }
.mt { flex: 1; table-layout: fixed; width: 510px; margin-right: -29px; border-collapse: collapse; align-self: flex-start; }
.mt + .vbar { position: relative; }
.c1 { width: 207px; } .c2 { width: 130px; } .c3 { width: 78px; }
.mt th { height: 25px; padding: 4px 0 0 9px; text-align: left; font-weight: 400; color: #222; background: #fafafa; border-right: 1px solid #d0d2d4; border-bottom: 1px solid #c9cccf; overflow: hidden; white-space: nowrap; }
.mt th:last-child, .mt td:last-child { border-right: 0; }
.fade { width: 114px; overflow: hidden; mask-image: linear-gradient(90deg, #000 85%, transparent); }
.mt td { height: 24px; padding: 0 0 0 2px; }
.mt td:first-child { border-right: 1px solid #dcdfe1; }
.mt tbody { background: #f8fafc; }
.cell { display: flex; align-items: center; gap: 7px; padding-left: 2px; height: 24px; white-space: pre; }
.cell.n1 { padding-left: 7px; } .cell.n1 .rt { margin-right: 3px; } .cell.n2 { padding-left: 26px; }
.hbars { display: flex; margin-left: 5px; padding-right: 29px; height: 25px; border-bottom: 1px solid #d5dbdb; }
.hbar { display: flex; flex: 1; height: 23px; border: 1px solid #d0d2d4; background: #dfe0e2; }
.hbar.pale { flex: none; width: 208px; background: #f6fafb; } .pale .sb { background: #f0f1f3; }
.hthumb { width: 138px; border: 1px solid #bfc1c3; background: #f9f9f9; }
.layerpick { display: flex; height: 34px; margin: 0 5px; }
.pick { width: 34px; display: flex; align-items: center; justify-content: center; border: 1px solid #adb0b2; background: #f8f8f8; }
.cur { width: 12px; height: 20px; }
.combo { position: relative; display: flex; flex: 1; background: #f8f8f8; border: 1px solid #adb0b2; }
.combo select { flex: 1; appearance: none; border: 0; background: none; color: inherit; padding: 0 0 0 10px; font: 400 15px "Noto Sans CJK SC", sans-serif; }
.layerpick .combo select { font: 400 14px "Liberation Mono", "Noto Sans CJK SC", monospace; }
.cbtn { display: flex; align-items: center; justify-content: center; width: 25px; border-left: 1px solid #adb0b2; pointer-events: none; }
.layers { flex: 1; margin-left: 5px; background: #f8fafc; }
.layers li { height: 26px; }
.layers .d0 { padding-left: 3px; gap: 12px; } .layers .d1 { padding-left: 10px; gap: 10px; }

.stage { display: flex; flex-direction: column; flex: 1; min-width: 0; border-right: 2px solid #b3b9bb; }
.canvas { position: relative; flex: 1; min-height: 0; background: #32312d; overflow: hidden; }
.drawing { position: absolute; inset: 0; width: 100%; height: 100%; }
.cad { font: 12px "Liberation Mono", monospace; fill: #b07a3c; }
.tiny { font: 7px "Liberation Mono", "Noto Sans CJK SC", monospace; fill: #7c7b77; }
.gtools { position: absolute; top: 7px; left: 50%; margin-left: -215px; width: 430px; display: flex; justify-content: flex-end; align-items: center; gap: 3px; height: 42px; background: #f8fafd; border: 1px solid #9a9c9e; }
.gt { display: flex; align-items: center; justify-content: center; width: 33px; height: 33px; border: 1px solid transparent; }
.gt.on { background: #e1e2e4; border-color: #b3b5b7; }
.sheets { display: flex; align-items: stretch; height: 38px; background: #f3f3f3; border-top: 1px solid #86888a; }
.nav { display: flex; align-items: center; gap: 14px; padding: 9px 17px 0 8px; }
.add { align-self: flex-end; width: 28px; height: 28px; border: 1px solid #9a9c9e; font: 18px "Liberation Sans", sans-serif; }
.page { width: 90px; padding-top: 7px; font-weight: 700; }
.rest { flex: 1; margin-top: 9px; background: #dedede; border: 1px solid #86888a; }

.mark { position: absolute; right: 15px; bottom: 6px; width: 170px; }
.big-mark { font: italic 300 38px/44px "Noto Sans CJK SC", sans-serif; color: #000; display: flex; gap: 10px; }
.fire { color: #fb6432; }
.flame { position: absolute; left: 68px; top: -23px; width: 20px; height: 54px; fill: #fb6432; }
.url { font: italic 17px/20px "Liberation Sans", sans-serif; color: #8f8f8f; }

.dialog { position: absolute; display: flex; flex-direction: column; background: #eeeff1; border: 1px solid #8b8e90; box-shadow: 0 3px 12px rgba(0, 0, 0, .4), inset 0 0 0 1px #f8f9f9; }
.items { left: 538px; top: 28px; width: 707px; }
.ann { right: -2px; top: 172px; width: 485px; border-color: #f4f5f6; }
.dtitle { position: relative; display: flex; align-items: center; justify-content: center; height: 39px; margin: 1px 1px 0; background: #d9dddc; }
.dtitle h1 { font-weight: 400; color: #222; }
.ann .dtitle { background: #e6e8e9; } .ann h1, .ann .x { color: #9d9fa1; }
.x { position: absolute; right: 17px; top: 14px; color: #555; }
.ibody { display: flex; }
.showcol { flex: none; width: 187px; padding: 16px 0 0 14px; border-right: 1px solid #b4b6b8; }
.showcol h2, .featcol h2 { font-weight: 700; height: 21px; }
.featcol { flex: 1; min-width: 0; padding: 16px 14px 20px 24px; }
.featcol h2 { margin-bottom: 9px; }
.chk { display: flex; align-items: center; height: 30px; padding-left: 3px; white-space: nowrap; }
.chk input { appearance: none; position: relative; flex: none; width: 15px; height: 15px; margin: 0; background: #fff; border: 1px solid #808284; }
.chk input::after { position: absolute; left: 1px; top: 2px; width: 11px; height: 9px; }
.chk input:checked::after { content: ""; background: #333; clip-path: polygon(0 42%, 15% 33%, 40% 66%, 88% 0, 100% 10%, 44% 100%, 34% 100%); }
.chk > span { margin-left: 14px; }
.chk.off { color: #b0b2b4; } .chk.off input { opacity: .35; }
.trow { display: flex; border: solid #c5c8ca; border-width: 0 1px; }
.trow.top { border-top-width: 1px; }
.ftab { height: 28px; color: #7b7d80; border-right: 1px solid #d0d3d5; border-bottom: 1px solid #c5c8ca; flex: 1 1 auto; }
.ftab:last-child { border-right: 0; }
.ftab.on { background: #fcfcfc; color: #222; border-bottom-color: #fcfcfc; }
.w80 { width: 80px; } .w94 { width: 94px; } .w110 { width: 110px; } .w132 { width: 132px; } .w149 { width: 149px; }
.fpanel { display: flex; height: 501px; padding: 14px 0 0 16px; background: #fcfcfc; border: 1px solid #c5c8ca; border-top: 0; }
.fcol { flex: none; width: 252px; } .fcol.second { flex: 1; width: auto; padding-top: 3px; }
.feat { padding-left: 0; height: 35px; } .feat svg { margin-left: 21px; } .feat > span { margin-left: 8px; }
.feat.sk > span { margin-left: 9px; }
.r40 { height: 40px; } .r38 { height: 38px; }
.pair { display: flex; gap: 5px; margin-top: 5px; }
.pair button { display: flex; align-items: center; justify-content: center; width: 39px; height: 39px; border: 1px solid #adb0b2; background: #f8f8f8; color: #444; }
.pair button:disabled { background: #ecedef; border-color: #d0d2d4; } .pair button:disabled svg { opacity: .5; }
.dfoot { display: flex; align-items: center; justify-content: flex-end; gap: 10px; height: 55px; margin: 0 1px; padding: 0 13px 0 0; border-top: 1px solid #c9cbcd; }
.btn { width: 82px; height: 29px; line-height: 26px; background: #f8f8f9; border: 1px solid #a9acae; }
.btn.ok { background: #a1e0fe; border-color: #6dc8fa; }
.btn:disabled { background: #e7e9ea; border-color: #cdd0d2; color: #aaacae; }
.vs { width: 1px; height: 29px; background: #b0b2b4; }
.abody { padding: 20px 12px 19px 13px; }
.atabs { display: flex; border-left: 1px solid #c5c8ca; }
.atab { width: 48px; height: 34px; display: flex; align-items: center; justify-content: center; border: 1px solid #c5c8ca; border-left: 0; }
.atab.on { background: #fcfcfc; border-bottom-color: #fcfcfc; margin-bottom: -1px; height: 35px; position: relative; }
.apanel { margin-top: -1px; background: #fcfcfc; border: 1px solid #c5c8ca; padding: 12px 12px 13px; }
.kind { display: flex; align-items: center; gap: 7px; }
.kind label { width: 38px; white-space: nowrap; }
.kind .combo { flex: none; width: 238px; height: 31px; }
.atable { height: 204px; margin-top: 12px; padding: 1px; background: #fff; border: 1px solid #b4b7b9; }
.atable table { width: 100%; table-layout: fixed; border-collapse: collapse; }
.k1 { width: 62px; } .k2 { width: 88px; } .k3 { width: 140px; }
.atable th { height: 26px; padding: 0; font-weight: 400; color: #222; background: #fafafa; border-right: 1px solid #d0d3d5; border-bottom: 1px solid #d0d3d5; }
.atable p { margin-top: 25px; text-align: center; }
.ann .dfoot { padding-right: 11px; }
</style>
